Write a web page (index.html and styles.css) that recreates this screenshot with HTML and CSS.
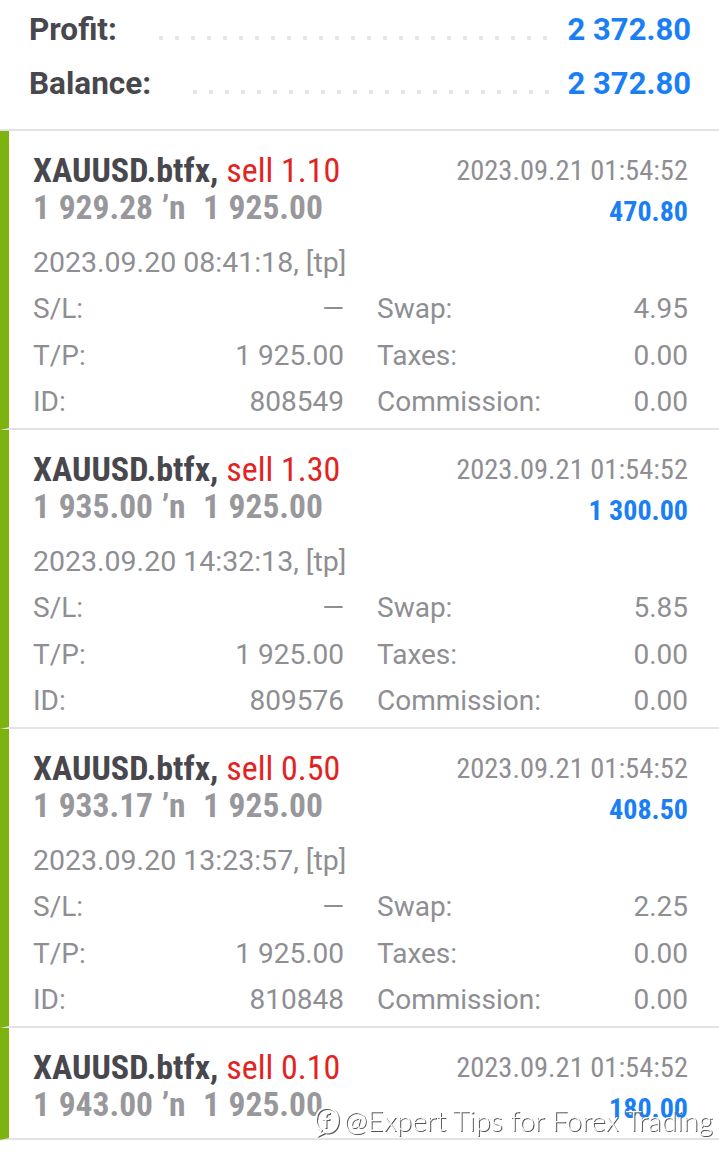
FILE: index.html
```html
<!DOCTYPE html>
<html lang="en">
<head>
  <meta charset="UTF-8" />
  <meta name="viewport" content="width=device-width, initial-scale=1.0"/>
  <title>History</title>
  <link rel="stylesheet" href="styles.css">
</head>
<body>
  <div class="screen">
    <section class="summary">
      <div class="sum-row">
        <span class="sum-label">Profit:</span>
        <span class="leader"></span>
        <span class="sum-value">2 372.80</span>
      </div>
      <div class="sum-row">
        <span class="sum-label">Balance:</span>
        <span class="leader"></span>
        <span class="sum-value">2 372.80</span>
      </div>
    </section>

    <div class="trade">
      <div class="trade-head">
        <div class="head-left">
          <div class="title"><span class="symbol">XAUUSD.btfx,</span> <span class="side">sell 1.10</span></div>
          <div class="prices">1 929.28 ʼn&nbsp; 1 925.00</div>
        </div>
        <div class="head-right">
          <div class="close-time">2023.09.21 01:54:52</div>
          <div class="profit">470.80</div>
        </div>
      </div>
      <div class="open-time">2023.09.20 08:41:18, [tp]</div>
      <div class="details">
        <div class="field"><span>S/L:</span><span>—</span></div>
        <div class="field"><span>Swap:</span><span>4.95</span></div>
        <div class="field"><span>T/P:</span><span>1 925.00</span></div>
        <div class="field"><span>Taxes:</span><span>0.00</span></div>
        <div class="field"><span>ID:</span><span>808549</span></div>
        <div class="field"><span>Commission:</span><span>0.00</span></div>
      </div>
    </div>

    <div class="trade">
      <div class="trade-head">
        <div class="head-left">
          <div class="title"><span class="symbol">XAUUSD.btfx,</span> <span class="side">sell 1.30</span></div>
          <div class="prices">1 935.00 ʼn&nbsp; 1 925.00</div>
        </div>
        <div class="head-right">
          <div class="close-time">2023.09.21 01:54:52</div>
          <div class="profit">1 300.00</div>
        </div>
      </div>
      <div class="open-time">2023.09.20 14:32:13, [tp]</div>
      <div class="details">
        <div class="field"><span>S/L:</span><span>—</span></div>
        <div class="field"><span>Swap:</span><span>5.85</span></div>
        <div class="field"><span>T/P:</span><span>1 925.00</span></div>
        <div class="field"><span>Taxes:</span><span>0.00</span></div>
        <div class="field"><span>ID:</span><span>809576</span></div>
        <div class="field"><span>Commission:</span><span>0.00</span></div>
      </div>
    </div>

    <div class="trade">
      <div class="trade-head">
        <div class="head-left">
          <div class="title"><span class="symbol">XAUUSD.btfx,</span> <span class="side">sell 0.50</span></div>
          <div class="prices">1 933.17 ʼn&nbsp; 1 925.00</div>
        </div>
        <div class="head-right">
          <div class="close-time">2023.09.21 01:54:52</div>
          <div class="profit">408.50</div>
        </div>
      </div>
      <div class="open-time">2023.09.20 13:23:57, [tp]</div>
      <div class="details">
        <div class="field"><span>S/L:</span><span>—</span></div>
        <div class="field"><span>Swap:</span><span>2.25</span></div>
        <div class="field"><span>T/P:</span><span>1 925.00</span></div>
        <div class="field"><span>Taxes:</span><span>0.00</span></div>
        <div class="field"><span>ID:</span><span>810848</span></div>
        <div class="field"><span>Commission:</span><span>0.00</span></div>
      </div>
    </div>

    <div class="trade trade-short">
      <div class="trade-head">
        <div class="head-left">
          <div class="title"><span class="symbol">XAUUSD.btfx,</span> <span class="side">sell 0.10</span></div>
          <div class="prices">1 943.00 ʼn&nbsp; 1 925.00</div>
        </div>
        <div class="head-right">
          <div class="close-time">2023.09.21 01:54:52</div>
          <div class="profit">180.00</div>
        </div>
      </div>
    </div>

    <div class="watermark">
      <svg class="wm-logo" width="28" height="34" viewBox="0 0 28 34">
        <path d="M14 5 C7 5 3 10 3 17 C3 22 5 25 8 27 L6 32 L12 29 C12.5 29.3 13.3 29.5 14 29.5 C21 29.5 25 24 25 17 C25 10 21 5 14 5 Z" fill="none" stroke="#fff" stroke-width="2"/>
        <path d="M17 10 C14.5 9.5 12.5 11 12.5 14 L12.5 25 M9.5 16 L16.5 16" fill="none" stroke="#fff" stroke-width="2"/>
      </svg>
      <span class="wm-text">@Expert Tips for Forex Trading</span>
    </div>
  </div>
</body>
</html>
```

FILE: styles.css
```css
* {
  margin: 0;
  padding: 0;
  box-sizing: border-box;
}

body {
  font-family: Roboto, "Liberation Sans", sans-serif;
  background: #fff;
  color: #8e8e93;
  width: 719px;
  height: 1166px;
  overflow: hidden;
}

.screen {
  position: relative;
  height: 100%;
}

/* summary */
.summary {
  padding: 2px 28px 19px 29px;
  border-bottom: 2px solid #e3e3e3;
}

.sum-row {
  display: flex;
  align-items: center;
  height: 54px;
}

.sum-label {
  font-size: 31.5px;
  font-weight: bold;
  color: #48474d;
}

.sum-value {
  font-size: 31px;
  font-weight: bold;
  color: #1a7ef5;
}

.leader {
  flex: 1;
  align-self: stretch;
  margin: 0 14px 0 36px;
  background-image: radial-gradient(circle, #e4e4e4 2px, transparent 2.6px);
  background-size: 16px 8px;
  background-repeat: repeat-x;
  background-position: left 0 top 32px;
}

/* trades */
.trade {
  border-left: 9px solid #7db30f;
  border-bottom: 2px solid #e3e3e3;
  padding: 20px 31px 6px 24px;
  height: 299px;
}

.trade-short {
  height: 112px;
}

.trade-head {
  display: flex;
  justify-content: space-between;
  font-stretch: condensed;
}

.title,
.prices {
  line-height: 38px;
}

.title {
  font-size: 34px;
}

.symbol {
  font-weight: bold;
  color: #48474d;
}

.side {
  color: #e2231f;
}

.prices {
  font-size: 33.5px;
  font-weight: bold;
  color: #98989c;
  word-spacing: 1px;
}

.head-right {
  text-align: right;
}

.close-time {
  font-size: 28.5px;
  line-height: 40px;
}

.profit {
  font-size: 28px;
  font-weight: bold;
  color: #1a7ef5;
  line-height: 42px;
}

.open-time {
  margin-top: 7px;
  font-size: 28.5px;
  line-height: 46px;
}

.details {
  display: grid;
  grid-template-columns: 1fr 1fr;
  column-gap: 33px;
}

.field {
  display: flex;
  justify-content: space-between;
  font-size: 28px;
  line-height: 46.5px;
}

/* overlay watermark */
.watermark {
  position: absolute;
  left: 313px;
  top: 1103px;
  display: flex;
  align-items: center;
  gap: 3px;
  white-space: nowrap;
  filter: drop-shadow(1px 1px 0 #555);
}

.wm-text {
  font-family: Lato, "Open Sans", sans-serif;
  font-weight: 300;
  font-size: 28px;
  color: #fff;
}
```
